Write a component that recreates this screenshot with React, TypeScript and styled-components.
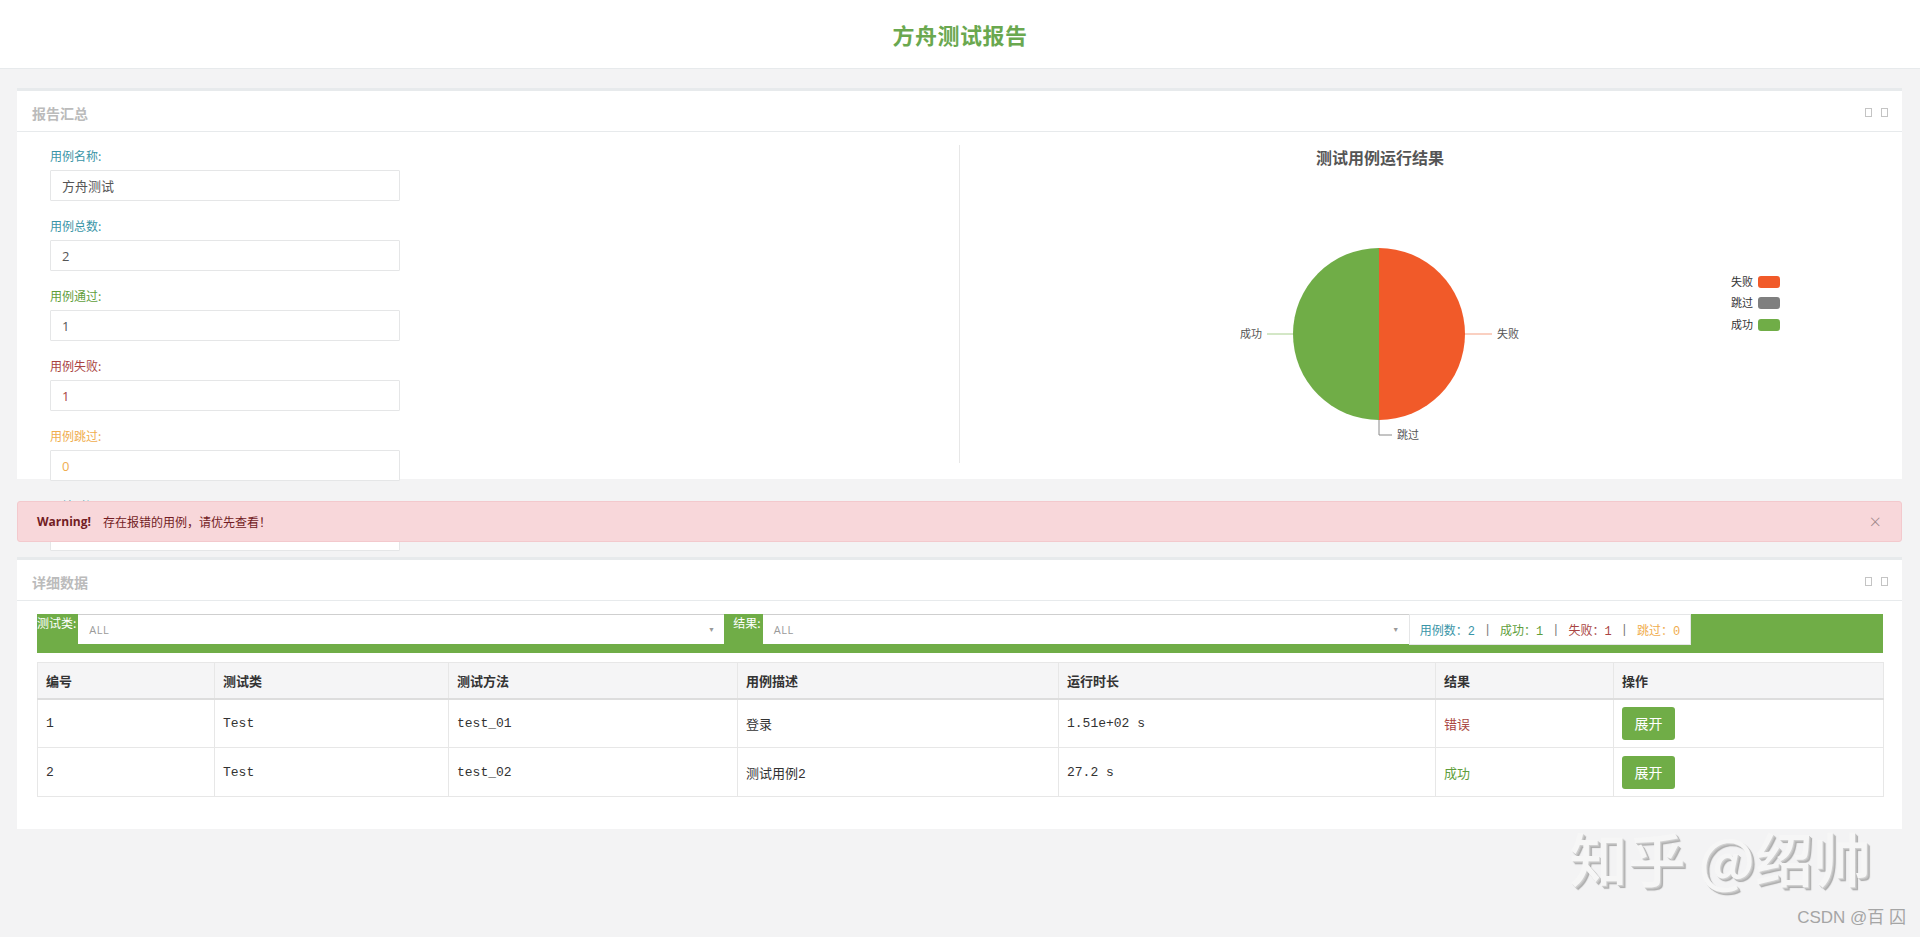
import React from "react";
import styled, { createGlobalStyle } from "styled-components";

const GREEN = "#70ad47";

const GlobalStyle = createGlobalStyle`
  html, body {
    margin: 0;
    padding: 0;
    background: #f3f3f4;
  }
  body {
    font-family: "Open Sans", "Noto Sans CJK SC", sans-serif;
    color: #676a6c;
  }
  * {
    box-sizing: border-box;
  }
`;

const tones: Record<string, string> = {
  info: "#3a95a7",
  success: "#5f9e3c",
  danger: "#a94442",
  warning: "#f0ad4e",
  plain: "#555555",
  muted: "#8a8a8a",
};

type Tone = keyof typeof tones;

const fields: { label: string; value: string; tone: Tone; valueTone: Tone }[] = [
  { label: "用例名称:", value: "方舟测试", tone: "info", valueTone: "plain" },
  { label: "用例总数:", value: "2", tone: "info", valueTone: "plain" },
  { label: "用例通过:", value: "1", tone: "success", valueTone: "plain" },
  { label: "用例失败:", value: "1", tone: "danger", valueTone: "danger" },
  { label: "用例跳过:", value: "0", tone: "warning", valueTone: "warning" },
  { label: "开始时间:", value: "", tone: "info", valueTone: "plain" },
];

const columns = [
  { title: "编号", width: 177 },
  { title: "测试类", width: 234 },
  { title: "测试方法", width: 289 },
  { title: "用例描述", width: 321 },
  { title: "运行时长", width: 377 },
  { title: "结果", width: 178 },
  { title: "操作", width: 270 },
];

const rows = [
  { id: "1", cls: "Test", method: "test_01", desc: "登录", time: "1.51e+02 s", result: "错误", ok: false },
  { id: "2", cls: "Test", method: "test_02", desc: "测试用例2", time: "27.2 s", result: "成功", ok: true },
];

// pie chart drawn in svg, coordinates relative to the chart column
const ResultPie = () => {
  const cx = 419;
  const cy = 189;
  const r = 86;
  const legend = [
    { name: "失败", color: "#f15a29", y: 137 },
    { name: "跳过", color: "#7f7f7f", y: 158 },
    { name: "成功", color: GREEN, y: 180 },
  ];
  return (
    <svg width={922} height={318}>
      <text
        x={420}
        y={19}
        textAnchor="middle"
        fontSize={16}
        fontWeight={700}
        fill="#555"
        fontFamily='"Noto Sans CJK SC", sans-serif'
      >
        测试用例运行结果
      </text>
      <path d={`M${cx},${cy} L${cx},${cy - r} A${r},${r} 0 0 1 ${cx},${cy + r} Z`} fill="#f15a29" />
      <path d={`M${cx},${cy} L${cx},${cy + r} A${r},${r} 0 0 1 ${cx},${cy - r} Z`} fill={GREEN} />

      <line x1={cx - r} y1={cy} x2={307} y2={cy} stroke="#a8cf8e" strokeWidth={1} />
      <line x1={cx + r} y1={cy} x2={532} y2={cy} stroke="#f5a184" strokeWidth={1} />
      <polyline points={`${cx},${cy + r} ${cx},290 432,290`} fill="none" stroke="#8a8a8a" strokeWidth={1} />

      <g fontSize={11} fill="#555" fontFamily='"Noto Sans CJK SC", sans-serif'>
        <text x={302} y={193} textAnchor="end">成功</text>
        <text x={537} y={193}>失败</text>
        <text x={437} y={294}>跳过</text>
      </g>

      {legend.map((item) => (
        <g key={item.name}>
          <text
            x={793}
            y={item.y + 4}
            textAnchor="end"
            fontSize={11}
            fill="#333"
            fontFamily='"Noto Sans CJK SC", sans-serif'
          >
            {item.name}
          </text>
          <rect x={798} y={item.y - 6} width={22} height={12} rx={3} fill={item.color} />
        </g>
      ))}
    </svg>
  );
};

export default function App() {
  return (
    <Page>
      <GlobalStyle />
      <TopBar>
        <Title>方舟测试报告</Title>
      </TopBar>

      <Content>
        <Panel $height={391}>
          <PanelHead>
            <PanelTitle>报告汇总</PanelTitle>
            <Tools>
              <ToolGlyph />
              <ToolGlyph />
            </Tools>
          </PanelHead>
          <SummaryBody>
            <FieldColumn>
              {fields.map((f) => (
                <Field key={f.label}>
                  <FieldLabel $tone={f.tone}>{f.label}</FieldLabel>
                  <FieldInput readOnly value={f.value} $tone={f.valueTone} />
                </Field>
              ))}
            </FieldColumn>
            <ChartColumn>
              <ResultPie />
            </ChartColumn>
          </SummaryBody>
        </Panel>

        <Alert>
          <strong>Warning!</strong>
          <AlertText>存在报错的用例，请优先查看！</AlertText>
          <CloseMark>×</CloseMark>
        </Alert>

        <Panel>
          <PanelHead>
            <PanelTitle>详细数据</PanelTitle>
            <Tools>
              <ToolGlyph />
              <ToolGlyph />
            </Tools>
          </PanelHead>
          <DetailBody>
            <FilterBar>
              <FilterLabel>测试类:</FilterLabel>
              <FakeSelect>
                ALL
                <Caret>▼</Caret>
              </FakeSelect>
              <FilterLabel $spaced>结果:</FilterLabel>
              <FakeSelect>
                ALL
                <Caret>▼</Caret>
              </FakeSelect>
              <Stats>
                <Stat $tone="info">用例数：2</Stat>
                <Sep>|</Sep>
                <Stat $tone="success">成功：1</Stat>
                <Sep>|</Sep>
                <Stat $tone="danger">失败：1</Stat>
                <Sep>|</Sep>
                <Stat $tone="warning">跳过：0</Stat>
              </Stats>
            </FilterBar>

            <ResultTable>
              <colgroup>
                {columns.map((c) => (
                  <col key={c.title} width={c.width} />
                ))}
              </colgroup>
              <thead>
                <tr>
                  {columns.map((c) => (
                    <HeadCell key={c.title}>{c.title}</HeadCell>
                  ))}
                </tr>
              </thead>
              <tbody>
                {rows.map((r) => (
                  <tr key={r.id}>
                    <Cell>{r.id}</Cell>
                    <Cell>{r.cls}</Cell>
                    <Cell>{r.method}</Cell>
                    <Cell>{r.desc}</Cell>
                    <Cell>{r.time}</Cell>
                    <Cell $tone={r.ok ? "success" : "danger"}>{r.result}</Cell>
                    <Cell>
                      <ExpandButton>展开</ExpandButton>
                    </Cell>
                  </tr>
                ))}
              </tbody>
            </ResultTable>
          </DetailBody>
        </Panel>
      </Content>

      <Watermark>知乎 @绍帅</Watermark>
      <Credit>CSDN @百 囚</Credit>
    </Page>
  );
}

///////// Styled Components /////////
const Page = styled.div`
  position: relative;
  min-height: 937px;
  background: #f3f3f4;
`;

const TopBar = styled.header`
  height: 69px;
  background: #fff;
  border-bottom: 1px solid #e7eaec;
  display: flex;
  align-items: center;
  justify-content: center;
`;

const Title = styled.h1`
  margin: 0;
  font-family: "Noto Sans CJK SC", sans-serif;
  font-size: 22px;
  font-weight: 700;
  color: #6aa84f;
  letter-spacing: 0.5px;
`;

const Content = styled.main`
  padding: 19px 18px 0 17px;
`;

const Panel = styled.section<{ $height?: number }>`
  background: #fff;
  border-top: 3px solid #e7eaec;
  height: ${(p) => (p.$height ? `${p.$height}px` : "auto")};
`;

const PanelHead = styled.div`
  height: 41px;
  padding: 14px 14px 0 15px;
  border-bottom: 1px solid #e7eaec;
  display: flex;
  justify-content: space-between;
`;

const PanelTitle = styled.h5`
  margin: 0;
  font-family: "Noto Sans CJK SC", sans-serif;
  font-size: 14px;
  line-height: 17px;
  font-weight: 600;
  color: #bbbbbb;
`;

const Tools = styled.div`
  display: flex;
  gap: 9px;
  padding-top: 3px;
`;

const ToolGlyph = styled.span`
  width: 7px;
  height: 9px;
  border: 1px solid #c4c4c4;
`;

const SummaryBody = styled.div`
  height: 347px;
  padding: 13px 20px 0;
  display: grid;
  grid-template-columns: 1fr 1fr;
  align-items: start;
`;

const FieldColumn = styled.div`
  padding: 2px 0 0 13px;
`;

const Field = styled.div`
  margin-bottom: 16px;
`;

const FieldLabel = styled.div<{ $tone: Tone }>`
  font-family: "Noto Sans CJK SC", sans-serif;
  font-size: 12px;
  line-height: 17px;
  margin-bottom: 6px;
  color: ${(p) => tones[p.$tone]};
`;

const FieldInput = styled.input<{ $tone: Tone }>`
  display: block;
  width: 350px;
  height: 31px;
  padding: 0 11px;
  border: 1px solid #e5e6e7;
  border-radius: 1px;
  background: #fff;
  font-family: "Open Sans", "Noto Sans CJK SC", sans-serif;
  font-size: 13px;
  color: ${(p) => tones[p.$tone]};
  outline: none;
`;

const ChartColumn = styled.div`
  height: 318px;
  border-left: 1px solid #e7e7e7;
`;

const Alert = styled.div`
  position: relative;
  z-index: 1;
  margin: 22px 0 15px;
  height: 41px;
  padding: 0 20px 0 19px;
  display: flex;
  align-items: center;
  background: #f8d7da;
  border: 1px solid #f3c9cd;
  border-radius: 3px;
  color: #721c24;
  font-family: "Open Sans", "Noto Sans CJK SC", sans-serif;
  font-size: 12px;

  strong {
    font-weight: 700;
  }
`;

const AlertText = styled.span`
  margin-left: 12px;
  font-family: "Noto Sans CJK SC", sans-serif;
`;

const CloseMark = styled.span`
  margin-left: auto;
  font-size: 20px;
  font-weight: 300;
  color: #a0888a;
  line-height: 1;
`;

const DetailBody = styled.div`
  padding: 13px 19px 32px 20px;
`;

const FilterBar = styled.div`
  height: 39px;
  background: ${GREEN};
  display: flex;
  align-items: flex-start;
`;

const FilterLabel = styled.span<{ $spaced?: boolean }>`
  font-family: "Noto Sans CJK SC", sans-serif;
  font-size: 12px;
  line-height: 18px;
  color: #fff;
  margin: 0 2px 0 ${(p) => (p.$spaced ? "9px" : "0")};
`;

const FakeSelect = styled.div`
  position: relative;
  width: 646px;
  height: 30px;
  padding-left: 11px;
  background: #fff;
  border-top: 1px solid #cfcfcf;
  font-family: "Open Sans", sans-serif;
  font-size: 11px;
  line-height: 29px;
  color: #9a9a9a;
  letter-spacing: 0.5px;
`;

const Caret = styled.span`
  position: absolute;
  right: 9px;
  top: 0;
  font-size: 7px;
  color: #999;
`;

const Stats = styled.div`
  height: 31px;
  padding: 0 10px;
  background: #fff;
  border: 1px solid #e5e6e7;
  display: flex;
  align-items: center;
  font-family: "Liberation Mono", "Noto Sans CJK SC", monospace;
  font-size: 12px;
`;

const Stat = styled.span<{ $tone: Tone }>`
  color: ${(p) => tones[p.$tone]};
`;

const Sep = styled.span`
  margin: 0 9px;
  color: #777;
`;

const ResultTable = styled.table`
  width: 100%;
  margin-top: 9px;
  border-collapse: collapse;
  table-layout: fixed;
`;

const HeadCell = styled.th`
  height: 36px;
  padding: 0 8px;
  text-align: left;
  background: #f5f5f6;
  border: 1px solid #e7e7e7;
  border-bottom: 2px solid #dddddd;
  font-family: "Noto Sans CJK SC", sans-serif;
  font-size: 13px;
  font-weight: 700;
  color: #333;
`;

const Cell = styled.td<{ $tone?: Tone }>`
  height: 49px;
  padding: 0 8px;
  border: 1px solid #e7e7e7;
  vertical-align: middle;
  font-family: "Liberation Mono", "Noto Sans CJK SC", monospace;
  font-size: 13px;
  color: ${(p) => (p.$tone ? tones[p.$tone] : "#333")};
`;

const ExpandButton = styled.button`
  width: 53px;
  height: 33px;
  border: none;
  border-radius: 3px;
  background: ${GREEN};
  color: #fff;
  font-family: "Noto Sans CJK SC", sans-serif;
  font-size: 14px;
  cursor: pointer;
`;

const Watermark = styled.div`
  position: absolute;
  right: 49px;
  top: 826px;
  font-family: "Noto Sans CJK SC", sans-serif;
  font-size: 58px;
  line-height: 62px;
  font-weight: 500;
  color: #f6f6f6;
  text-shadow: 1px 1px 0 #d0d0d0, 2px 2px 0 #bdbdbd, 3px 3px 1px #aaaaaa;
  white-space: nowrap;
`;

const Credit = styled.div`
  position: absolute;
  right: 14px;
  top: 907px;
  font-family: "Liberation Sans", "Noto Sans CJK SC", sans-serif;
  font-size: 17px;
  line-height: 22px;
  color: #a5a5a5;
  white-space: nowrap;
`;
